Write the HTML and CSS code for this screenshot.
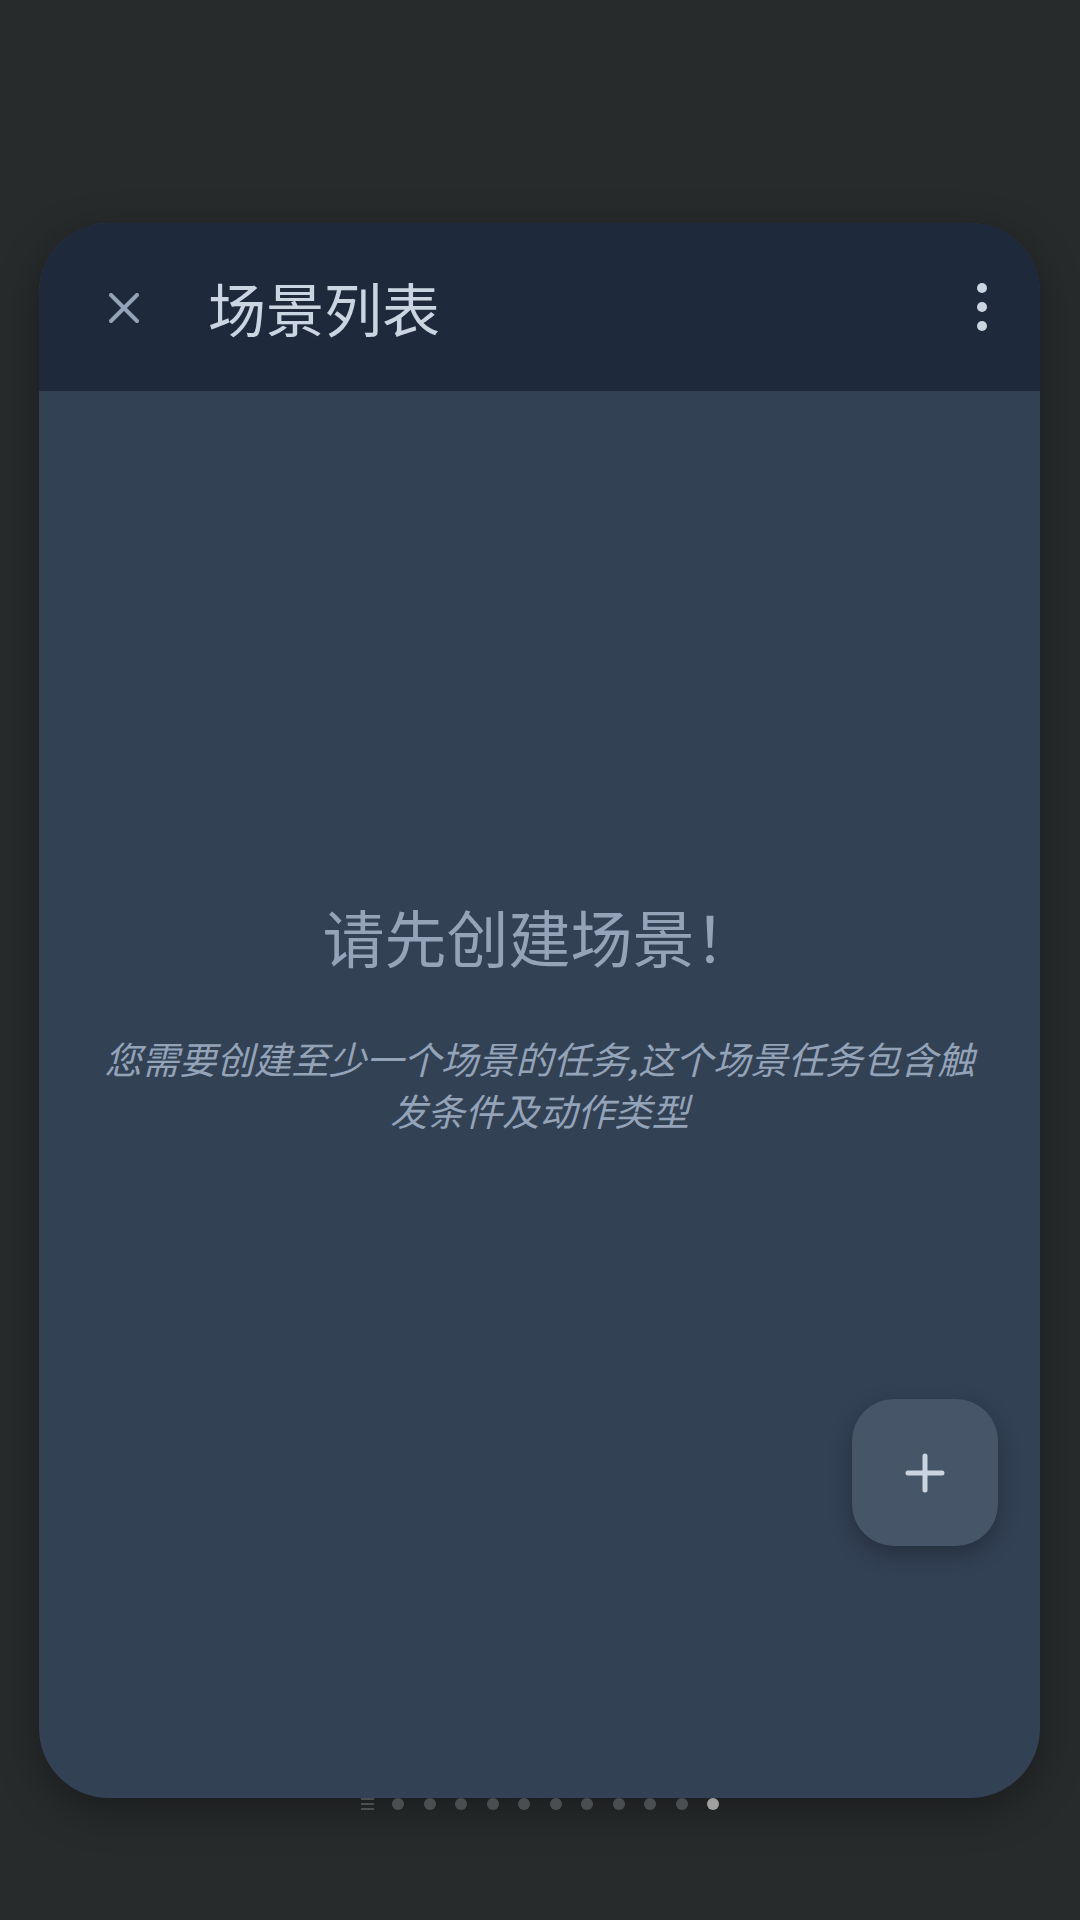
FILE: index.html
```html
<!DOCTYPE html>
<html lang="zh-CN">
<head>
<meta charset="utf-8">
<title>场景列表</title>
<link rel="stylesheet" href="styles.css">
</head>
<body>
<div class="screen">
  <div class="card">
    <header class="appbar">
      <button class="icon-btn close-btn" aria-label="关闭">
        <svg width="30" height="30" viewBox="0 0 30 30"><path d="M2 2 L28 28 M28 2 L2 28" stroke="#94a3b8" stroke-width="4" stroke-linecap="round" fill="none"/></svg>
      </button>
      <h1 class="appbar-title">场景列表</h1>
      <button class="icon-btn menu-btn" aria-label="更多">
        <svg width="12" height="50" viewBox="0 0 12 50"><circle cx="6" cy="6" r="5" fill="#cbd5e1"/><circle cx="6" cy="25" r="5" fill="#cbd5e1"/><circle cx="6" cy="44" r="5" fill="#cbd5e1"/></svg>
      </button>
    </header>
    <main class="content">
      <div class="empty">
        <h2 class="empty-title">请先创建场景！</h2>
        <p class="empty-text">您需要创建至少一个场景的任务,这个场景任务包含触发条件及动作类型</p>
      </div>
      <button class="fab" aria-label="添加">
        <svg width="40" height="40" viewBox="0 0 40 40"><path d="M20 3 V37 M3 20 H37" stroke="#cbd5e1" stroke-width="5" stroke-linecap="round" fill="none"/></svg>
      </button>
    </main>
  </div>
  <div class="pager">
    <span class="pager-menu"><i></i><i></i><i></i></span>
    <span class="dot"></span><span class="dot"></span><span class="dot"></span><span class="dot"></span><span class="dot"></span><span class="dot"></span><span class="dot"></span><span class="dot"></span><span class="dot"></span><span class="dot"></span><span class="dot active"></span>
  </div>
</div>
</body>
</html>
```
FILE: styles.css
```css
* { box-sizing: border-box; }
html, body {
  margin: 0;
  padding: 0;
  background: #282b2c;
}
body {
  width: 1080px;
  height: 1920px;
  overflow: hidden;
  font-family: "Noto Sans CJK SC", "Noto Sans", sans-serif;
}
.screen {
  position: relative;
  width: 1080px;
  height: 1920px;
  padding: 223px 40px 0 39px;
}
.card {
  width: 1001px;
  height: 1575px;
  border-radius: 70px;
  overflow: hidden;
  display: flex;
  flex-direction: column;
  background: #334155;
  box-shadow: 0 12px 40px rgba(0, 0, 0, 0.35);
}
.appbar {
  height: 168px;
  flex: none;
  background: #1e293b;
  display: flex;
  align-items: center;
  padding: 0 34px 0 61px;
}
.icon-btn {
  width: 48px;
  height: 48px;
  border: 0;
  padding: 0;
  background: transparent;
  display: flex;
  align-items: center;
  justify-content: center;
}
.close-btn svg { margin-top: 1px; }
.appbar-title {
  margin: 0 0 0 60px;
  flex: 1;
  font-size: 58px;
  font-weight: 400;
  line-height: 70px;
  color: #cbd5e1;
}
.content {
  position: relative;
  flex: 1;
  padding: 508px 56px 0;
}
.empty {
  display: flex;
  flex-direction: column;
  align-items: center;
  text-align: center;
}
.empty-title {
  margin: 0;
  font-size: 62px;
  font-weight: 400;
  line-height: 74px;
  color: #94a3b8;
}
.empty-text {
  margin: 59px 0 0;
  font-size: 37.4px;
  line-height: 52px;
  font-style: italic;
  color: #94a3b8;
}
.fab {
  position: absolute;
  right: 42px;
  bottom: 252px;
  width: 146px;
  height: 147px;
  border: 0;
  border-radius: 42px;
  background: #475569;
  display: flex;
  align-items: center;
  justify-content: center;
  box-shadow: 0 8px 22px rgba(0, 0, 0, 0.28);
}
.pager {
  position: absolute;
  left: 0;
  right: 0;
  top: 1798px;
  height: 12px;
  display: flex;
  justify-content: center;
  align-items: center;
  gap: 19.5px;
}
.pager-menu {
  width: 13px;
  height: 12px;
  display: flex;
  flex-direction: column;
  justify-content: space-between;
  margin-right: -1px;
}
.pager-menu i {
  display: block;
  height: 2px;
  background: #4b4e50;
}
.dot {
  width: 12px;
  height: 12px;
  border-radius: 50%;
  background: #4b4e50;
}
.dot.active { background: #a0a0a0; }
```
